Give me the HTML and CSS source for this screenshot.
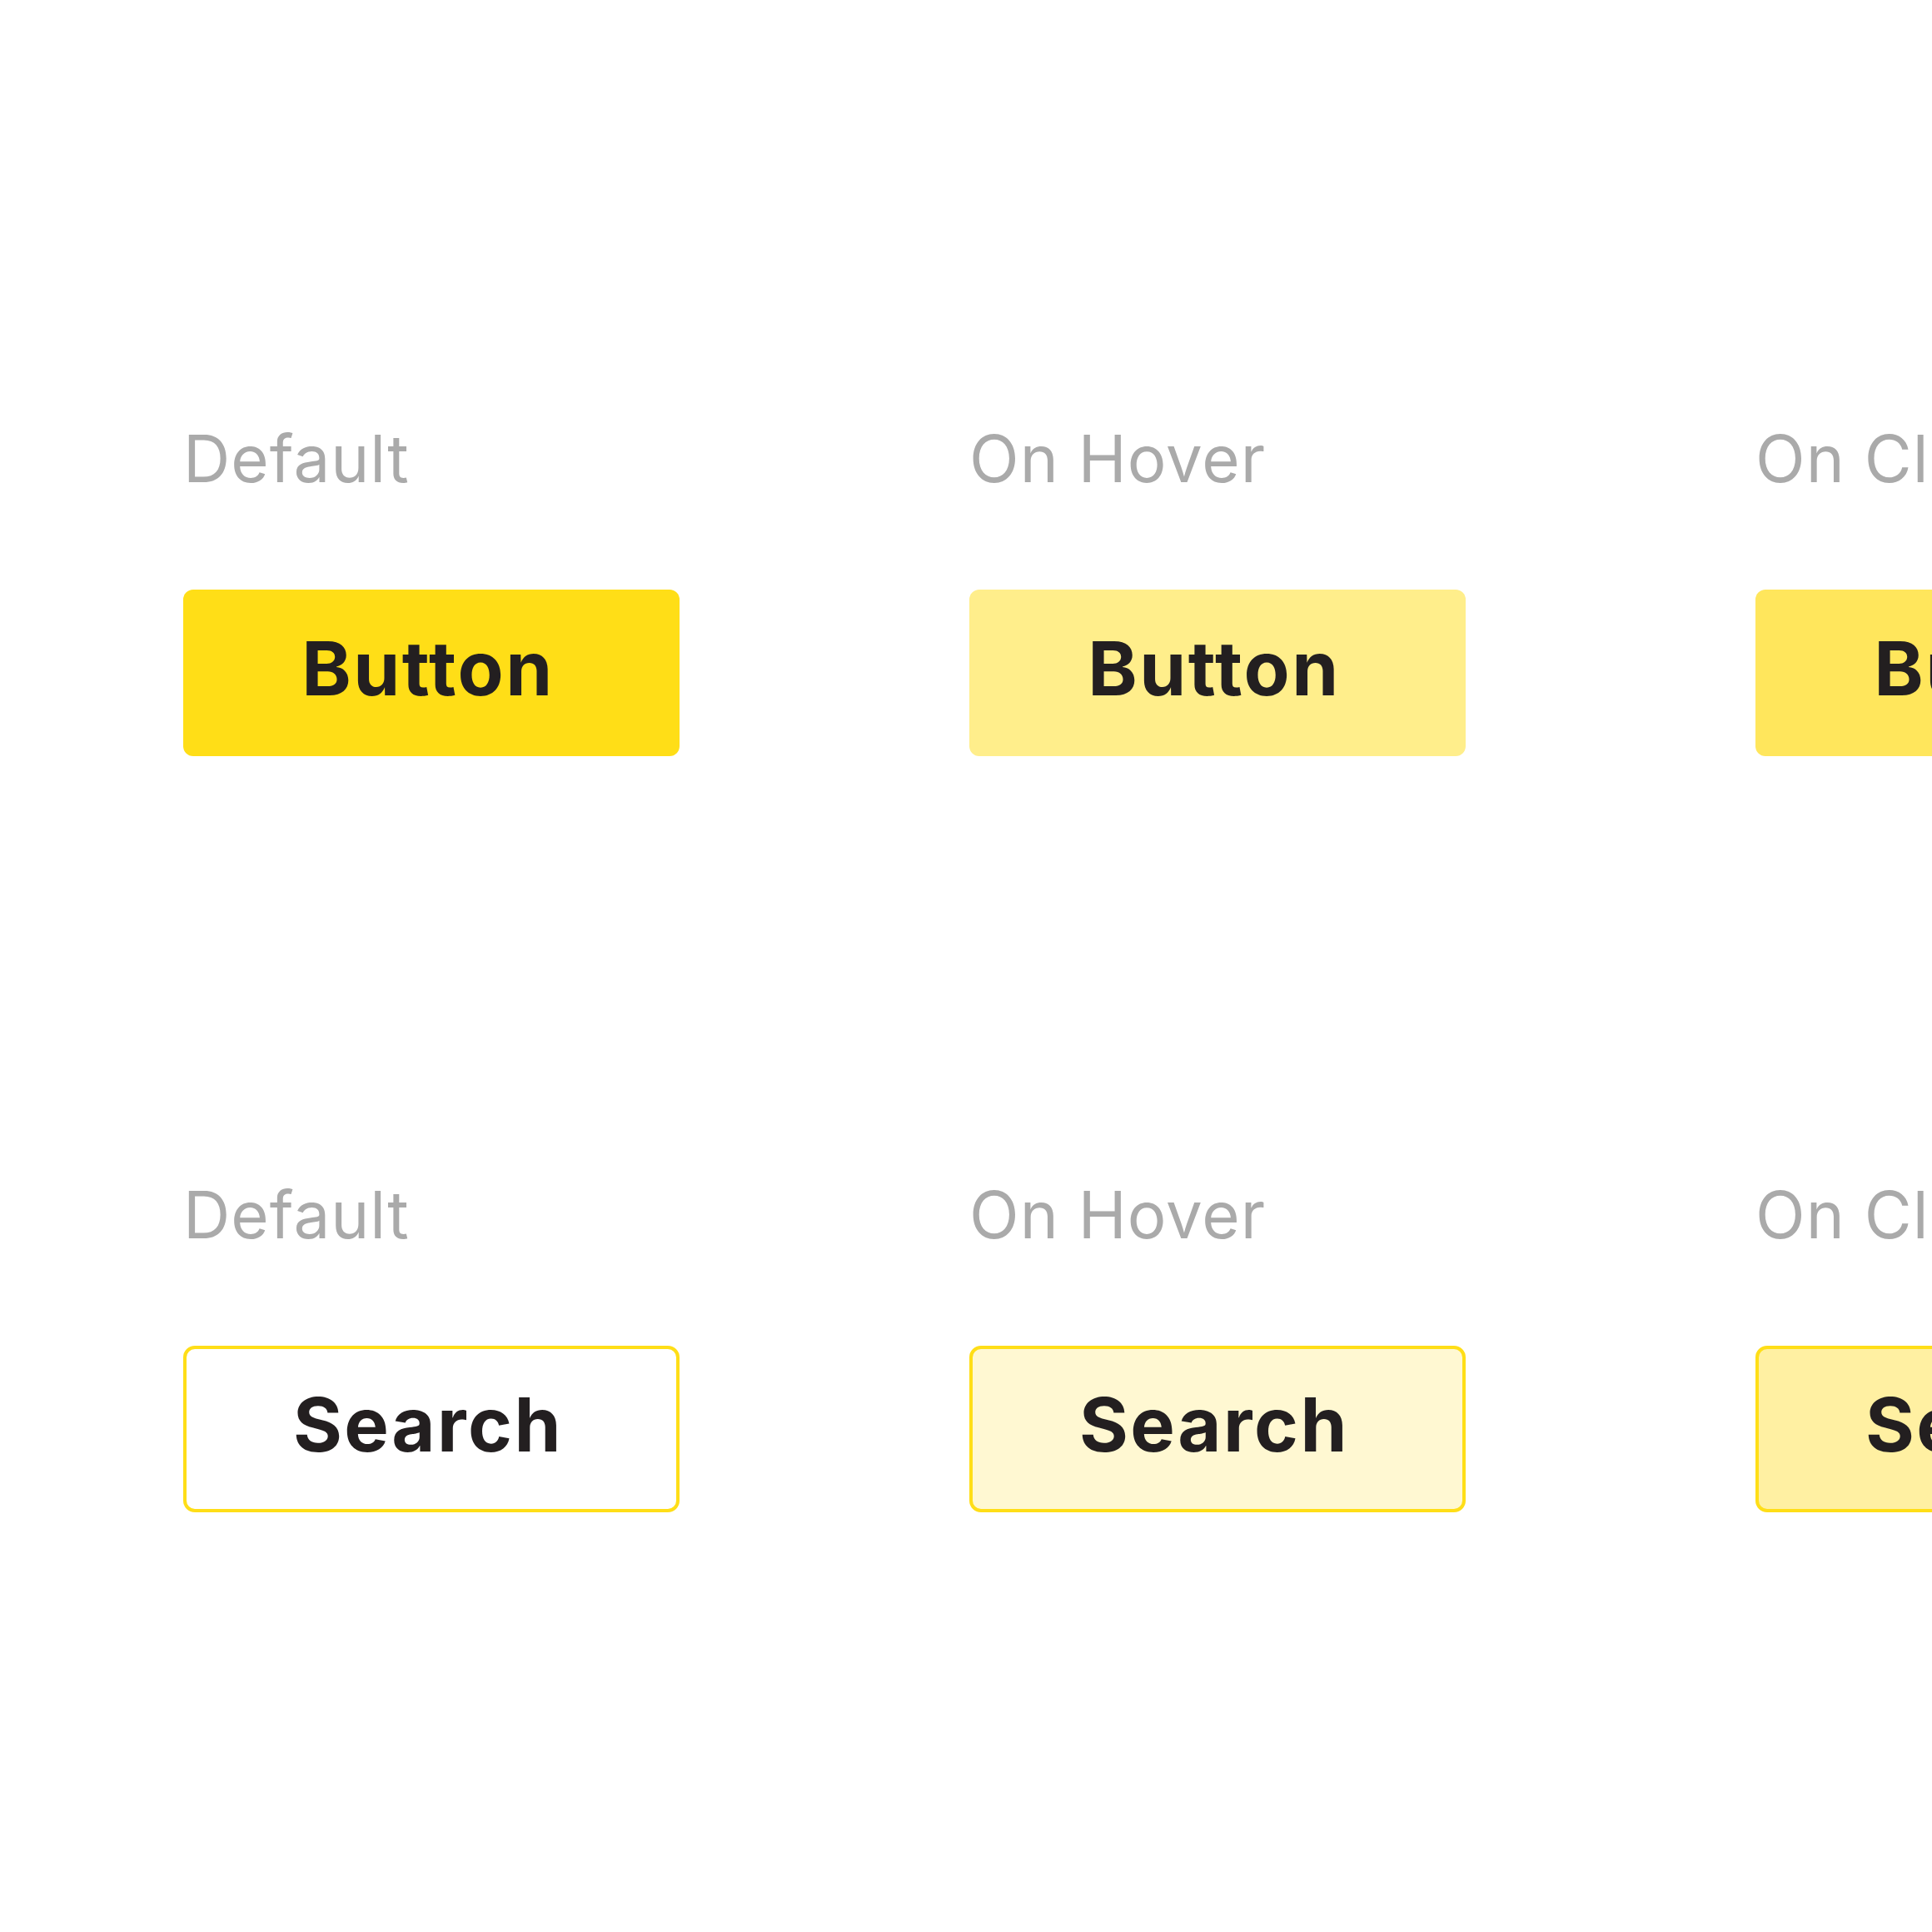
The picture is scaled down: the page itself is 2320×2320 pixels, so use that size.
FILE: index.html
```html
<!DOCTYPE html>
<html lang="en">
<head>
<meta charset="utf-8">
<title>Button states</title>
<link rel="stylesheet" href="styles.css">
</head>
<body>
<main class="board">
  <section class="cell">
    <div class="label">Default</div>
    <div class="btn btn-solid btn-solid-default">Button</div>
  </section>
  <section class="cell">
    <div class="label">On Hover</div>
    <div class="btn btn-solid btn-solid-hover">Button</div>
  </section>
  <section class="cell">
    <div class="label">On Click</div>
    <div class="btn btn-solid btn-solid-click">Button</div>
  </section>
  <section class="cell">
    <div class="label">Default</div>
    <div class="btn btn-outline btn-outline-default">Search</div>
  </section>
  <section class="cell">
    <div class="label">On Hover</div>
    <div class="btn btn-outline btn-outline-hover">Search</div>
  </section>
  <section class="cell">
    <div class="label">On Click</div>
    <div class="btn btn-outline btn-outline-click">Search</div>
  </section>
</main>
</body>
</html>
```

FILE: styles.css
```css
html, body {
  margin: 0;
  padding: 0;
  background: #ffffff;
  overflow: hidden;
  width: 2320px;
  height: 2320px;
}

body {
  font-family: Inter, "Noto Sans", "Liberation Sans", sans-serif;
}

.board {
  display: grid;
  grid-template-columns: repeat(3, 596px);
  column-gap: 348px;
  row-gap: 512px;
  padding: 512px 0 0 220px;
  width: max-content;
}

.cell {
  display: flex;
  flex-direction: column;
  gap: 118px;
}

.label {
  font-size: 78px;
  line-height: 78px;
  height: 78px;
  font-weight: 400;
  letter-spacing: 1px;
  color: #aaaaaa;
  white-space: nowrap;
}

.btn {
  box-sizing: border-box;
  height: 200px;
  width: 596px;
  border-radius: 12px;
  display: flex;
  align-items: center;
  justify-content: center;
  padding: 0 8px 10px 0;
  font-size: 90px;
  line-height: 1;
  font-weight: 700;
  letter-spacing: 2.5px;
  color: #231f20;
  white-space: nowrap;
}

.btn-solid-default { background: #ffde17; }
.btn-solid-hover { background: #ffee8b; }
.btn-solid-click { background: #ffe65c; }

.btn-outline {
  border: 4px solid #ffde17;
  border-radius: 14px;
}

.btn-outline-default { background: #ffffff; }
.btn-outline-hover { background: #fff8d2; }
.btn-outline-click { background: #fff0a2; }
```
